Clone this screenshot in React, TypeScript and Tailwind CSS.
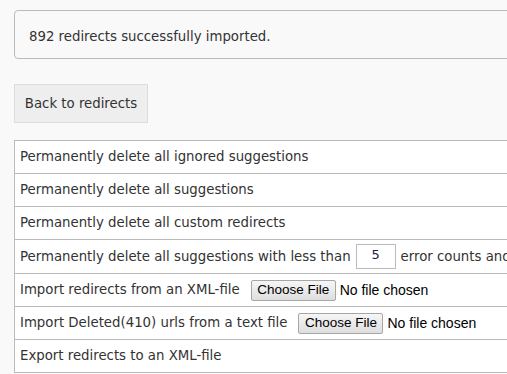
import React from "react";

const rowText = "text-[13.3px] text-[#333] whitespace-nowrap";
const verdana = { fontFamily: '"DejaVu Sans", Verdana, sans-serif' };

function FileInput() {
  return (
    <span className="ml-[11px] inline-flex items-center" style={{ fontFamily: '"Liberation Sans", Arial, sans-serif' }}>
      <span className="inline-flex h-[21px] w-[85px] items-center justify-center rounded-[2px] border border-[#a6a6a6] bg-gradient-to-b from-[#f6f6f6] to-[#dedede] text-[13.5px] text-black">
        Choose File
      </span>
      <span className="ml-[4px] text-[14px] text-black">No file chosen</span>
    </span>
  );
}

export default function App() {
  return (
    <div className="h-[374px] w-full overflow-hidden bg-[#f9f9f9]" style={verdana}>
      <div className="w-[700px] pl-[14px] pt-[10px]">
        {/* Import result notice */}
        <div className="flex h-[49px] items-center rounded-[4px] border border-[#bbb] pl-[14px] pt-[5px] text-[13.3px] text-[#333]">
          892 redirects successfully imported.
        </div>

        <button className="mt-[25px] flex h-[39px] w-[134px] items-center justify-center border border-[#ddd] bg-[#eee] text-[13.3px] text-[#333]">
          Back to redirects
        </button>

        {/* Actions table */}
        <div className="mt-[17px] border-l border-t border-[#bbb] bg-white">
          <div className={`flex h-[33px] items-center border-b border-[#bbb] pl-[5px] ${rowText}`}>
            Permanently delete all ignored suggestions
          </div>
          <div className={`flex h-[33px] items-center border-b border-[#bbb] pl-[5px] ${rowText}`}>
            Permanently delete all suggestions
          </div>
          <div className={`flex h-[33px] items-center border-b border-[#bbb] pl-[5px] ${rowText}`}>
            Permanently delete all custom redirects
          </div>
          <div className={`flex h-[34px] items-center border-b border-[#bbb] pl-[5px] ${rowText}`}>
            Permanently delete all suggestions with less than
            <span className="mx-[5px] inline-flex h-[25px] w-[40px] items-center justify-center border border-[#bbb] bg-white pb-[3px] text-[13px] text-[#1a1a4a]">
              5
            </span>
            error counts and older than 30 days
          </div>
          <div className={`flex h-[33px] items-center border-b border-[#bbb] pl-[5px] ${rowText}`}>
            Import redirects from an XML-file
            <FileInput />
          </div>
          <div className={`flex h-[33px] items-center border-b border-[#bbb] pl-[5px] ${rowText}`}>
            Import Deleted(410) urls from a text file
            <FileInput />
          </div>
          <div className={`flex h-[33px] items-center border-b border-[#bbb] pl-[5px] ${rowText}`}>
            Export redirects to an XML-file
          </div>
        </div>
      </div>
    </div>
  );
}
